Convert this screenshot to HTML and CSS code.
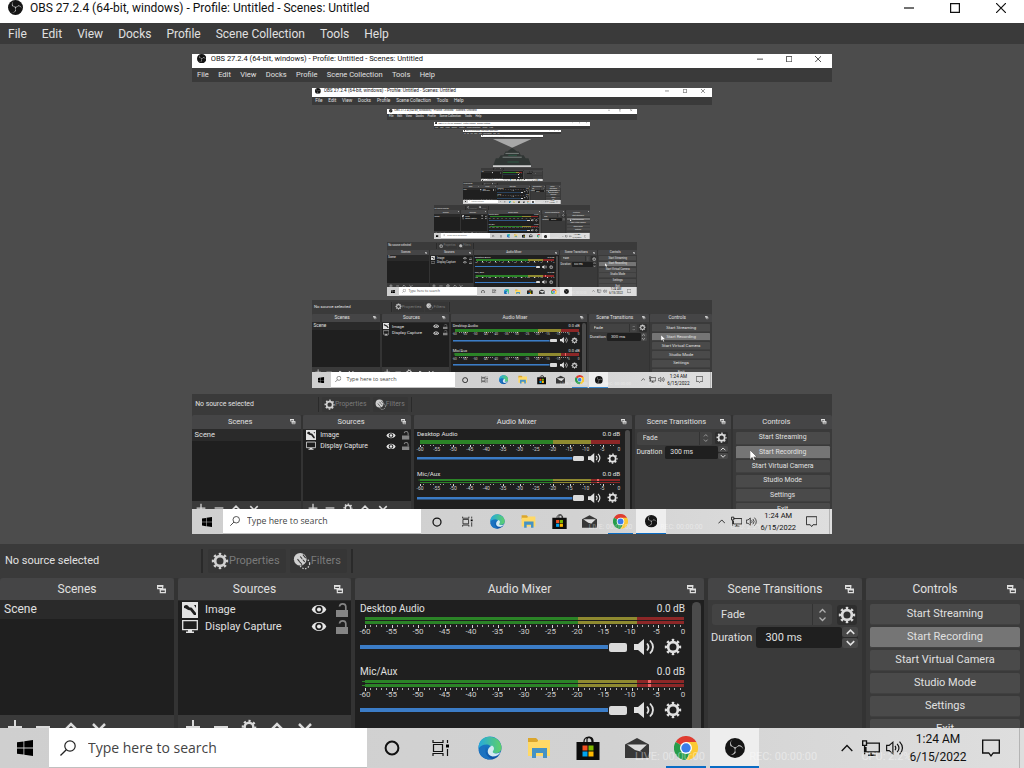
FILE: index.html
```html
<!DOCTYPE html>
<html lang="en">
<head>
<meta charset="utf-8">
<meta name="viewport" content="width=device-width, initial-scale=1">
<title>OBS 27.2.4</title>
<link rel="stylesheet" href="styles.css">
</head>
<body>
<svg class="sprite" aria-hidden="true">
  <defs>
    <linearGradient id="edge-blue" x1="0" y1="0" x2="0" y2="1"><stop offset="0" stop-color="#1b8fd6"/><stop offset="1" stop-color="#0f4fa3"/></linearGradient>
    <linearGradient id="edge-green" x1="0" y1="0" x2="1" y2="0"><stop offset="0" stop-color="#25a9de"/><stop offset="1" stop-color="#5fd068"/></linearGradient>
  </defs>
  <symbol id="i-obs" viewBox="0 0 24 24">
    <circle cx="12" cy="12" r="12" fill="#151515"/>
    <path fill="#c8c8c8" d="M6.182 5.99c.352-1.698 1.503-3.229 3.05-3.996-.269.273-.595.483-.844.78-1.02 1.1-1.48 2.692-1.199 4.156.355 2.235 2.455 4.06 4.732 4.028 1.765.079 3.485-.937 4.348-2.468 1.848.063 3.645 1.017 4.7 2.548.54.799.962 1.736.991 2.711-.342-1.295-1.202-2.446-2.375-3.095-1.135-.639-2.529-.802-3.772-.425-1.56.448-2.849 1.723-3.293 3.293-.377 1.25-.216 2.628.377 3.772-.825 1.429-2.315 2.449-3.932 2.756-1.244.261-2.551.059-3.709-.464 1.036.302 2.161.355 3.191-.011 1.381-.457 2.522-1.567 3.024-2.935.556-1.49.345-3.261-.591-4.54-.7-1.007-1.803-1.717-3.002-1.969-.38-.068-.764-.098-1.148-.134-.611-1.231-.834-2.66-.528-3.996z"/>
  </symbol>
  <symbol id="i-gear" viewBox="0 0 20 20">
    <circle cx="10" cy="10" r="5.4" fill="none" stroke="currentColor" stroke-width="3"/>
    <circle cx="10" cy="10" r="7.700" fill="none" stroke="currentColor" stroke-width="2.800" pathLength="16" stroke-dasharray="0.9 1.1" stroke-dashoffset="0.45"/>
  </symbol>
  <symbol id="i-filters" viewBox="0 0 20 20">
    <circle cx="8" cy="8" r="7" fill="currentColor"/>
    <path d="M5 8l5 6M8 5l5 6M11 3l4 5" stroke="#3a3a3a" stroke-width="1.2"/>
    <circle cx="13" cy="13" r="5.5" fill="none" stroke="currentColor" stroke-width="1.4" stroke-dasharray="1.6 1.6"/>
  </symbol>
  <symbol id="i-float" viewBox="0 0 10 10"><path d="M.7 1h5.6v3H.7zM3.700 5h5.600v3.500H3.700z" fill="none" stroke="currentColor" stroke-width="1.300"/><path d="M0 0h7v2H0zM3 4h7v2H3z" fill="currentColor"/></symbol>
  <symbol id="i-image" viewBox="0 0 16 16"><path d="M0 0h16v16H0z" fill="#e2e2e2"/><path d="M2 4c2-2 4-1 5 1 1 1 2 0 3 1l4 5V13h-2L8 8C6 9 4 6 2 6zM12 3h2v3z" fill="#1f1f1f"/></symbol>
  <symbol id="i-display" viewBox="0 0 16 16"><path d="M.7 1.700h14.600v9H.7z" fill="none" stroke="#e2e2e2" stroke-width="1.300"/><path d="M6 11h4v1.500h2V14H4v-1.500h2z" fill="#e2e2e2"/></symbol>
  <symbol id="i-eye" viewBox="0 0 16 12"><path d="M0 6C3-.5 13-.5 16 6 13 12.500 3 12.500 0 6z" fill="#e6e6e6"/><circle cx="8" cy="6" r="4" fill="#1f1f1f"/><circle cx="8" cy="6" r="2.200" fill="#e6e6e6"/></symbol>
  <symbol id="i-lock" viewBox="0 0 12 14"><path d="M0 7h12v7H0z" fill="#858585"/><path d="M3.500 3.500C4 0 9.500 0 9.800 3.500V7" fill="none" stroke="#858585" stroke-width="1.700"/></symbol>
  <symbol id="i-plus" viewBox="0 0 16 16"><path d="M8 1v14M1 8h14" stroke="currentColor" stroke-width="2"/></symbol>
  <symbol id="i-minus" viewBox="0 0 16 16"><path d="M1 8h14" stroke="currentColor" stroke-width="2"/></symbol>
  <symbol id="i-up" viewBox="0 0 16 16"><path d="M2 11l6-6 6 6" fill="none" stroke="currentColor" stroke-width="2.500"/></symbol>
  <symbol id="i-down" viewBox="0 0 16 16"><path d="M2 5l6 6 6-6" fill="none" stroke="currentColor" stroke-width="2.500"/></symbol>
  <symbol id="i-speaker" viewBox="0 0 22 16"><path d="M0 5h4l6-5v16l-6-5H0z" fill="#e0e0e0"/><path d="M13 4.500q3 3.500 0 7M16 1.500q6 6.500 0 13" fill="none" stroke="#e0e0e0" stroke-width="1.800"/></symbol>
  <symbol id="i-pointer" viewBox="0 0 12 18"><path d="M0 0v15l3.500-3.300L6 17.500l2.500-1L6 11h5z" fill="#fff" stroke="#222" stroke-width=".6"/></symbol>
  <symbol id="i-windows" viewBox="0 0 16 16"><path d="M0 2.300L6.500 1.400v6.200H0zM7.300 1.300L16 0v7.600H7.300zM0 8.400h6.500v6.200L0 13.700zM7.300 8.400H16V16l-8.700-1.300z"/></symbol>
  <symbol id="i-search" viewBox="0 0 16 16"><circle cx="10" cy="6" r="5.200" fill="none" stroke="#222" stroke-width="1.200"/><path d="M6.300 9.700L.5 15.500" stroke="#222" stroke-width="1.300"/></symbol>
  <symbol id="i-cortana" viewBox="0 0 16 16"><circle cx="8" cy="8" r="6.400" fill="none" stroke="#111" stroke-width="2"/></symbol>
  <symbol id="i-taskview" viewBox="0 0 18 16"><path d="M1 0v2.500h10V0M1 16v-2.500h10V16M1.500 4.500h9v7h-9zM15.500 0v3M15.500 9v7" fill="none" stroke="#111" stroke-width="1.200"/><path d="M14 4.500h3v3h-3z"/></symbol>
  <symbol id="i-edge" viewBox="0 0 24 24">
    <circle cx="12" cy="12" r="11.500" fill="url(#edge-blue)"/>
    <path d="M.8 10C2-3 22-2 23.500 11c.3 4.500-3 6.500-7 6.500-3 0-4.500-1.500-3.500-3 2-3-1-6-4.500-6C4.500 8.500 2 10 .5 13z" fill="url(#edge-green)"/>
    <path d="M14 9.500c3 2 2 4.500 1 5.500-1 1.500.5 2.500 3 2.500 2 0 4-.8 5-2-1.500 3-4.500 5-8.500 5-6-1-6.500-8-.5-11z" fill="#d3e9f2"/>
    <path d="M8 10c-2 5 0 11 6 13-5 1-12-1-13.300-8C1 11 5 9 8 10z" fill="#1b72c0"/>
  </symbol>
  <symbol id="i-folder" viewBox="0 0 24 22"><path d="M1 1h8l2 2v4H1z" fill="#dba62c"/><path d="M1 5l9 0 2-2h11v16H1z" fill="#ffd966"/><path d="M5 11h15v10h-4v-5H9v5H5z" fill="#4592c4"/></symbol>
  <symbol id="i-store" viewBox="0 0 24 24"><path d="M8 7V5.500C8 0 16 0 16 5.500V7M11 7V3c1-3 6-2 6 2v2" fill="none" stroke="#111" stroke-width="1.200"/><path d="M.5 6h23v18H.5z" fill="#0c0c0c"/><path d="M6.500 9.500H11.500v5H6.500z" fill="#f25022"/><path d="M12.500 9.500h5v5h-5z" fill="#7fba00"/><path d="M6.500 15.500h5v5h-5z" fill="#00a4ef"/><path d="M12.500 15.500h5v5h-5z" fill="#ffb900"/></symbol>
  <symbol id="i-mail" viewBox="0 0 24 20"><path d="M0 6.500L12 0l12 6.500V20H0z" fill="#383838"/><path d="M2 6.500h20l-7 6.500 2 1-7-2z" fill="#dcdcdc"/></symbol>
  <symbol id="i-chrome" viewBox="0 0 24 24"><path d="M12 12L1.600 6a12 12 0 0 1 20.800 0z" fill="#df3c30"/><path d="M12 12L1.600 6A12 12 0 0 0 12 24l5-9z" fill="#279c49"/><path d="M12 12h0l5.200 3L12 24A12 12 0 0 0 22.400 6H12z" fill="#fcc934"/><circle cx="12" cy="12" r="6" fill="#fff"/><circle cx="12" cy="12" r="4.700" fill="#3b7de8"/></symbol>
  <symbol id="i-chevron" viewBox="0 0 12 8"><path d="M.7 7L6 1.500 11.300 7" fill="none" stroke="#111" stroke-width="1.300"/></symbol>
  <symbol id="i-network" viewBox="0 0 16 14"><path d="M4 2.600h11.400v7.800H3.500V6M.6.6H4v4H.6zM2.300 4.600v8M8 10.400v3M5.500 13.400h6.500" fill="none" stroke="#111" stroke-width="1.200"/></symbol>
  <symbol id="i-volume" viewBox="0 0 17 14"><path d="M.6 4.500H3L6.500 1.500v11L3 9.500H.6z" fill="none" stroke="#111" stroke-width="1.100"/><path d="M8.500 5q1.500 2 0 4M10.500 3q3.500 4 0 8M12.800 1q5.500 6 0 12" fill="none" stroke="#111" stroke-width="1.100"/></symbol>
  <symbol id="i-notice" viewBox="0 0 16 16"><path d="M.6 1h14.800v11.400H10L8 15l-2-2.600H.6z" fill="none" stroke="#111" stroke-width="1.200"/></symbol>
  <symbol id="i-min" viewBox="0 0 10 10"><path d="M0 5h10" stroke="#111" stroke-width="1.200"/></symbol>
  <symbol id="i-max" viewBox="0 0 10 10"><path d="M.6.6h8.800v8.800H.6z" fill="none" stroke="#111" stroke-width="1.200"/></symbol>
  <symbol id="i-close" viewBox="0 0 10 10"><path d="M0 0l10 10M10 0L0 10" stroke="#111" stroke-width="1.200"/></symbol>
  <symbol id="i-vanish" viewBox="0 0 40 30" preserveAspectRatio="none">
    <path d="M0 0h40L20 9z" fill="#a8a8a8"/>
    <path d="M20 9l5 4h2l2 4h3l2 3h3l3 8v1H0v-1l3-8h3l2-3h3l2-4h2z" fill="#303634"/>
    <path d="M13 15h14M10 19h20" stroke="#7d8582" stroke-width="1"/>
    <path d="M16 17h9M15 24h12" stroke="#2c5a45" stroke-width="1"/>
    <path d="M0 28.500h40" stroke="#cfcfcf" stroke-width="2"/>
  </symbol>
</svg>

<div class="screen">
  <header class="titlebar">
    <svg class="logo"><use href="#i-obs"/></svg>
    <span class="caption">OBS 27.2.4 (64-bit, windows) - Profile: Untitled - Scenes: Untitled</span>
    <button class="winbtn" aria-label="Minimize"><svg><use href="#i-min"/></svg></button>
    <button class="winbtn" aria-label="Maximize"><svg><use href="#i-max"/></svg></button>
    <button class="winbtn" aria-label="Close"><svg><use href="#i-close"/></svg></button>
  </header>
  <nav class="menubar">
    <button>File</button><button>Edit</button><button>View</button><button>Docks</button><button>Profile</button><button>Scene Collection</button><button>Tools</button><button>Help</button>
  </nav>
  <main class="preview"><div class="capture"></div></main>

  <section class="context">
    <span class="context-name">No source selected</span>
    <div class="context-tools">
      <button class="tool" disabled><svg class="s18"><use href="#i-gear"/></svg>Properties</button>
      <button class="tool" disabled><svg class="s18"><use href="#i-filters"/></svg>Filters</button>
    </div>
  </section>

  <section class="docks">
    <section class="dock">
      <header class="dock-head"><h2>Scenes</h2><button aria-label="Float Scenes"><svg><use href="#i-float"/></svg></button></header>
      <ul class="list"><li class="scene">Scene</li></ul>
      <div class="dock-tools">
        <button aria-label="Add scene"><svg><use href="#i-plus"/></svg></button><button aria-label="Remove scene"><svg><use href="#i-minus"/></svg></button><button aria-label="Move scene up"><svg><use href="#i-up"/></svg></button><button aria-label="Move scene down"><svg><use href="#i-down"/></svg></button>
      </div>
    </section>

    <section class="dock">
      <header class="dock-head"><h2>Sources</h2><button aria-label="Float Sources"><svg><use href="#i-float"/></svg></button></header>
      <ul class="list">
        <li class="source"><svg class="s16"><use href="#i-image"/></svg><span>Image</span><button aria-label="Hide Image"><svg class="eye"><use href="#i-eye"/></svg></button><button aria-label="Lock Image"><svg class="lock"><use href="#i-lock"/></svg></button></li>
        <li class="source"><svg class="s16"><use href="#i-display"/></svg><span>Display Capture</span><button aria-label="Hide Display Capture"><svg class="eye"><use href="#i-eye"/></svg></button><button aria-label="Lock Display Capture"><svg class="lock"><use href="#i-lock"/></svg></button></li>
      </ul>
      <div class="dock-tools">
        <button aria-label="Add source"><svg><use href="#i-plus"/></svg></button><button aria-label="Remove source"><svg><use href="#i-minus"/></svg></button><button aria-label="Source properties"><svg><use href="#i-gear"/></svg></button><button aria-label="Move source up"><svg><use href="#i-up"/></svg></button><button aria-label="Move source down"><svg><use href="#i-down"/></svg></button>
      </div>
    </section>

    <section class="dock">
      <header class="dock-head"><h2>Audio Mixer</h2><button aria-label="Float Audio Mixer"><svg><use href="#i-float"/></svg></button></header>
      <div class="mixer">
        <div class="channels">
          <div class="channel">
            <div class="channel-head"><span>Desktop Audio</span><span>0.0 dB</span></div>
            <div class="meter"><div class="bar"></div><div class="bar"></div><div class="ticks"></div></div>
            <div class="scale"><span>-60</span><span>-55</span><span>-50</span><span>-45</span><span>-40</span><span>-35</span><span>-30</span><span>-25</span><span>-20</span><span>-15</span><span>-10</span><span>-5</span><span>0</span></div>
            <div class="fader"><input type="range" min="0" max="100" value="100" aria-label="Desktop Audio volume"><button aria-label="Mute Desktop Audio"><svg class="speaker"><use href="#i-speaker"/></svg></button><button aria-label="Desktop Audio settings"><svg class="s18"><use href="#i-gear"/></svg></button></div>
          </div>
          <div class="channel live">
            <div class="channel-head"><span>Mic/Aux</span><span>0.0 dB</span></div>
            <div class="meter"><div class="bar"></div><div class="bar"></div><div class="ticks"></div></div>
            <div class="scale"><span>-60</span><span>-55</span><span>-50</span><span>-45</span><span>-40</span><span>-35</span><span>-30</span><span>-25</span><span>-20</span><span>-15</span><span>-10</span><span>-5</span><span>0</span></div>
            <div class="fader"><input type="range" min="0" max="100" value="100" aria-label="Mic/Aux volume"><button aria-label="Mute Mic/Aux"><svg class="speaker"><use href="#i-speaker"/></svg></button><button aria-label="Mic/Aux settings"><svg class="s18"><use href="#i-gear"/></svg></button></div>
          </div>
        </div>
        <div class="scrollbar"></div>
      </div>
    </section>

    <section class="dock">
      <header class="dock-head"><h2>Scene Transitions</h2><button aria-label="Float Scene Transitions"><svg><use href="#i-float"/></svg></button></header>
      <div class="transitions">
        <div class="row">
          <div class="combo"><select aria-label="Transition"><option>Fade</option></select><span class="steps"><svg><use href="#i-up"/></svg><svg><use href="#i-down"/></svg></span></div>
          <button class="gear" aria-label="Transition properties"><svg class="s18"><use href="#i-gear"/></svg></button>
        </div>
        <div class="row">
          <label class="duration"><span>Duration</span><input type="text" value="300 ms"></label>
          <div class="spin"><button aria-label="Increase duration"><svg><use href="#i-up"/></svg></button><button aria-label="Decrease duration"><svg><use href="#i-down"/></svg></button></div>
        </div>
      </div>
    </section>

    <section class="dock">
      <header class="dock-head"><h2>Controls</h2><button aria-label="Float Controls"><svg><use href="#i-float"/></svg></button></header>
      <div class="controls">
        <button>Start Streaming</button>
        <button class="hot">Start Recording<svg class="pointer"><use href="#i-pointer"/></svg></button>
        <button>Start Virtual Camera</button>
        <button>Studio Mode</button>
        <button>Settings</button>
        <button>Exit</button>
      </div>
    </section>
  </section>

  <footer class="taskbar">
    <button class="start" aria-label="Start"><svg class="s16"><use href="#i-windows"/></svg></button>
    <label class="search"><svg class="s16"><use href="#i-search"/></svg><input type="text" placeholder="Type here to search" aria-label="Type here to search"></label>
    <div class="apps">
      <button aria-label="Cortana"><svg class="s16"><use href="#i-cortana"/></svg></button>
      <button aria-label="Task View"><svg class="s18"><use href="#i-taskview"/></svg></button>
      <button aria-label="Edge"><svg class="s24"><use href="#i-edge"/></svg></button>
      <button aria-label="File Explorer"><svg class="s24"><use href="#i-folder"/></svg></button>
      <button aria-label="Store"><svg class="s24"><use href="#i-store"/></svg></button>
      <button aria-label="Mail"><svg class="s24"><use href="#i-mail"/></svg></button>
      <button class="open" aria-label="Chrome"><svg class="s24"><use href="#i-chrome"/></svg></button>
      <button class="open current" aria-label="OBS"><svg class="s20"><use href="#i-obs"/></svg></button>
    </div>
    <div class="status"><span>LIVE: 00:00:00</span><span>REC: 00:00:00</span><span>CPU: 2.2%</span></div>
    <div class="tray">
      <button aria-label="Show hidden icons"><svg class="chev"><use href="#i-chevron"/></svg></button>
      <button aria-label="Network"><svg class="s18"><use href="#i-network"/></svg></button>
      <button aria-label="Volume"><svg class="s18"><use href="#i-volume"/></svg></button>
      <div class="clock"><span>1:24 AM</span><span>6/15/2022</span></div>
      <button class="notice" aria-label="Notifications"><svg class="s18"><use href="#i-notice"/></svg></button>
      <span class="desk"></span>
    </div>
  </footer>
</div>
<template id="vanish"><svg class="vanish"><use href="#i-vanish"/></svg></template>
<script src="main.js"></script>
</body>
</html>
```
FILE: styles.css
```css
* { box-sizing: border-box; margin: 0; padding: 0; }
html, body { height: 100%; overflow: hidden; }
body { font: 11px/14px Roboto, "Liberation Sans", sans-serif; color: #e0e0e0; background: #4c4c4c; }
button, input, select { font: inherit; color: inherit; background: none; border: 0; border-radius: 0; outline: 0; }
svg { display: block; flex: none; }
ul { list-style: none; }
.sprite { position: absolute; width: 0; height: 0; }
.s16 { width: 16px; height: 16px; }
.s18 { width: 18px; height: 18px; }
.s20 { width: 20px; height: 20px; }
.s24 { width: 24px; height: 24px; }

.screen { display: flex; flex-direction: column; width: 100%; height: 100%; overflow: hidden; background: #3a3a3a; }

.titlebar { display: flex; flex: none; align-items: flex-start; height: 23px; background: #fff; color: #111; font-size: 12px; line-height: 16px; }
.logo { width: 15px; height: 15px; margin: 0 7px 0 8px; }
.caption { flex: 1; min-width: 0; white-space: nowrap; overflow: hidden; }
.winbtn { display: grid; place-items: center; flex: none; width: 46px; height: 15px; }
.winbtn svg { width: 10px; height: 10px; }

.menubar { display: flex; flex: none; height: 21px; padding-left: 1px; background: #3a3a3a; font-size: 12px; }
.menubar button { padding: 0 8px 0 7px; white-space: nowrap; }

.preview { flex: 1; min-height: 0; padding: 10px 0; display: flex; justify-content: center; background: #4c4c4c; }
.capture { height: 100%; aspect-ratio: 4 / 3; }
.capture .screen { zoom: 0.625; }
.vanish { width: 100%; height: 100%; }

.context { display: flex; flex: none; align-items: center; height: 34px; padding-left: 5px; background: #3a3a3a; white-space: nowrap; }
.context-name { flex: none; width: 196px; }
.context-tools { display: flex; gap: 4px; height: 24px; padding: 0 4px 0 5px; border-left: 2px solid #2a2a2a; border-right: 2px solid #2a2a2a; }
.tool { display: flex; align-items: center; padding: 0 6px 0 3px; background: #363636; color: #7a7a7a; border-radius: 2px; }
.tool svg { color: #d0d0d0; }

.docks { display: grid; flex: none; grid-template-columns: 174fr 173fr 349fr 154fr 158fr; gap: 4px; height: 150px; overflow: hidden; background: #333; }
.dock { min-width: 0; background: #3a3a3a; }
.dock-head { display: flex; align-items: center; height: 22px; background: #454546; border-radius: 3px 3px 0 0; }
.dock-head h2 { flex: 1; font-size: 12px; font-weight: 400; text-align: center; white-space: nowrap; }
.dock-head button { width: 20px; display: grid; place-items: center; padding-right: 5px; }
.dock-head svg { width: 9px; height: 9px; }
.list { height: 115px; background: #1f1f1f; border-top: 1px solid #2a2a2a; }
.scene { height: 18px; padding: 0 4px; background: #2a2a2a; font-size: 12px; line-height: 16px; }
.source { display: flex; align-items: center; height: 17px; padding: 0 3px 0 4px; }
.source span { flex: 1; padding-left: 7px; white-space: nowrap; }
.source button { margin-left: 9px; }
.eye { width: 16px; height: 11px; }
.lock { width: 12px; height: 14px; }
.dock-tools { display: flex; align-items: flex-start; gap: 12px; padding: 4px 7px; color: #dadada; }
.dock-tools svg { width: 16px; height: 16px; }

.mixer { display: flex; height: 128px; background: #1f1f1f; padding: 2px 3px 0 5px; gap: 7px; }
.channels { flex: 1; min-width: 0; font-size: 10px; }
.channel { height: 63px; }
.channel-head { display: flex; justify-content: space-between; height: 15px; }
.meter { margin: 0 1px 0 5px; display: grid; grid-template-rows: 3px 3px 3px; row-gap: 1px; }
.bar { background: linear-gradient(90deg, #2b8327 0 66.7%, #8f8a30 66.7% 85.300%, #8c2727 85.300%); }
.live .bar { background: linear-gradient(90deg, transparent 0 88.700%, #ef6464 88.700% 89.700%, transparent 89.700%), linear-gradient(90deg, #2b8327 0 66.7%, #8f8a30 66.7% 85.300%, #8c2727 85.300%); box-shadow: -4px 0 0 -1px #2b8327; }
.ticks { margin-right: -1px; background: repeating-linear-gradient(90deg, #d8d8d8 0 1px, transparent 1px 8.333%) 0 0 / 100% 4px no-repeat, repeating-linear-gradient(90deg, #a8a8a8 0 1px, transparent 1px 1.666%) 0 0 / 100% 2px no-repeat; }
.scale { display: flex; justify-content: space-between; margin: 0 -5px 0 -2px; height: 8px; font-size: 8px; line-height: 8px; color: #ccc; }
.scale span { width: 14px; text-align: center; }
.fader { display: flex; align-items: center; gap: 8px; height: 20px; margin-top: 1px; padding-right: 3px; }
.fader input { appearance: none; flex: 1; min-width: 0; height: 12px; margin-right: -1px; background: linear-gradient(#3b7cc6, #3b7cc6) 0 50% / 100% 4px no-repeat; }
.fader input::-webkit-slider-thumb { appearance: none; width: 18px; height: 9px; border-radius: 2px; background: #dadada; box-shadow: -1px 0 #1f1f1f; }
.fader button { color: #e0e0e0; }
.speaker { width: 22px; height: 16px; }
.scrollbar { width: 9px; margin-bottom: -8px; border-radius: 5px; background: #4b4b4b; }

.transitions { padding: 4px 4px 0; display: grid; gap: 2px; }
.row { display: flex; align-items: center; height: 21px; }
.combo { flex: 1; min-width: 0; height: 21px; display: flex; background: #434343; border-radius: 3px; margin-right: 5px; }
.combo select { appearance: none; flex: 1; min-width: 0; padding-left: 9px; border-right: 1px solid #333; }
.steps { width: 19px; display: grid; place-content: center; color: #b0b0b0; }
.steps svg { width: 9px; height: 8px; }
.gear { width: 20px; height: 20px; margin-right: 1px; display: grid; place-items: center; background: #2e2e2e; color: #dadada; border-radius: 3px; }
.duration { flex: 1; min-width: 0; display: flex; align-items: center; gap: 4px; margin-left: -1px; }
.duration input { flex: 1; min-width: 0; width: 40px; height: 21px; padding-left: 9px; background: #1f1f1f; border-radius: 3px; }
.spin { width: 16px; height: 21px; display: grid; gap: 1px; background: #2a2a2a; border-radius: 3px; }
.spin button { display: grid; place-items: center; background: #484848; border-radius: 2px; }
.spin svg { width: 13px; height: 10px; }

.controls { display: grid; gap: 2px; padding: 4px 4px 0; }
.controls button { position: relative; height: 21px; background: #4a4a4a; border-radius: 2px; border-bottom: 1px solid #404040; white-space: nowrap; }
.controls .hot { background: #757575; }
.pointer { display: none; position: absolute; left: 23px; top: 6px; width: 12px; height: 18px; }
.capture .pointer { display: block; }

.taskbar { position: relative; display: flex; flex: none; height: 40px; background: linear-gradient(90deg, #cfcfcf, #d2d2d2 60%, #dedede); color: #111; }
.start { width: 49px; display: grid; place-items: center; }
.search { flex: 0 1 318px; min-width: 0; display: flex; align-items: center; padding-left: 11px; gap: 12px; background: #fff; border-bottom: 1px solid #c0c0c0; }
.search input { flex: 1; min-width: 0; font: 14px/20px "Open Sans", sans-serif; color: #333; }
.search input::placeholder { color: #444; opacity: 1; }
.apps { display: flex; flex: none; }
.apps button { width: 49px; display: grid; place-items: center; }
.apps .open { background: linear-gradient(#0a6cc4, #0a6cc4) 50% 100% / 40px 2px no-repeat; }
.apps .current { background: linear-gradient(#0a6cc4, #0a6cc4) 50% 100% / 100% 2px no-repeat, #eee; }
.status { position: absolute; left: 62%; right: 11%; bottom: 4px; display: flex; gap: 20px; justify-content: space-between; color: #fff; opacity: .4; pointer-events: none; white-space: nowrap; }
.tray { display: flex; align-items: center; margin-left: auto; }
.tray button { width: 24px; display: grid; place-items: center; }
.chev { width: 12px; height: 8px; }
.clock { display: grid; width: 62px; text-align: center; font-size: 12px; line-height: 18px; }
.tray .notice { width: 44px; margin-right: 6px; }
.desk { width: 5px; height: 40px; border-left: 1px solid #b4b4b4; }
```
FILE: main.js
```javascript
// The display capture shows the desktop inside itself, level after level,
// until the copies are too small to carry any detail.
const LEVELS = 6;
const desktop = document.querySelector('.screen');
const pattern = desktop.cloneNode(true);
let target = desktop.querySelector('.capture');
for (let level = 0; level < LEVELS; level++) {
  const copy = pattern.cloneNode(true);
  copy.inert = true;
  copy.setAttribute('aria-hidden', 'true');
  target.append(copy);
  target = copy.querySelector('.capture');
}
target.append(document.getElementById('vanish').content.cloneNode(true));
```
